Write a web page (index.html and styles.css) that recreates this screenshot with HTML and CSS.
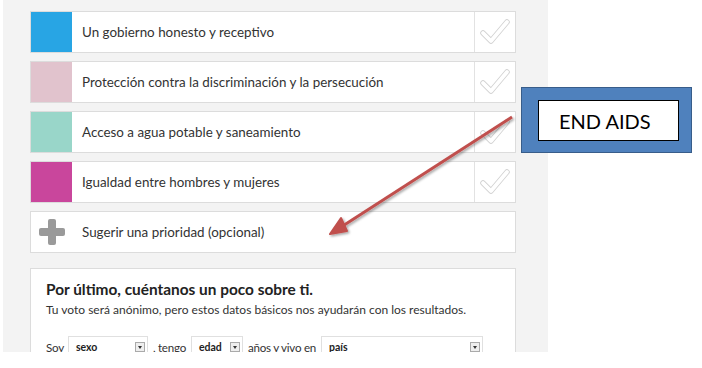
FILE: index.html
```html
<!DOCTYPE html>
<html lang="es">
<head>
<meta charset="utf-8">
<link rel="stylesheet" href="styles.css">
</head>
<body>
<div class="page">
  <div class="list">
    <div class="row">
      <div class="swatch blue"></div>
      <div class="label">Un gobierno honesto y receptivo</div>
      <div class="check"><svg width="30" height="26" viewBox="0 0 30 26"><path d="M3 14 L11 22 L27 3" fill="none" stroke="#d2d2d2" stroke-width="5.5" stroke-linecap="round" stroke-linejoin="round"/><path d="M3 14 L11 22 L27 3" fill="none" stroke="#fff" stroke-width="3.8" stroke-linecap="round" stroke-linejoin="round"/></svg></div>
    </div>
    <div class="row">
      <div class="swatch pink"></div>
      <div class="label">Protección contra la discriminación y la persecución</div>
      <div class="check"><svg width="30" height="26" viewBox="0 0 30 26"><path d="M3 14 L11 22 L27 3" fill="none" stroke="#d2d2d2" stroke-width="5.5" stroke-linecap="round" stroke-linejoin="round"/><path d="M3 14 L11 22 L27 3" fill="none" stroke="#fff" stroke-width="3.8" stroke-linecap="round" stroke-linejoin="round"/></svg></div>
    </div>
    <div class="row">
      <div class="swatch teal"></div>
      <div class="label">Acceso a agua potable y saneamiento</div>
      <div class="check"><svg width="30" height="26" viewBox="0 0 30 26"><path d="M3 14 L11 22 L27 3" fill="none" stroke="#d2d2d2" stroke-width="5.5" stroke-linecap="round" stroke-linejoin="round"/><path d="M3 14 L11 22 L27 3" fill="none" stroke="#fff" stroke-width="3.8" stroke-linecap="round" stroke-linejoin="round"/></svg></div>
    </div>
    <div class="row">
      <div class="swatch magenta"></div>
      <div class="label">Igualdad entre hombres y mujeres</div>
      <div class="check"><svg width="30" height="26" viewBox="0 0 30 26"><path d="M3 14 L11 22 L27 3" fill="none" stroke="#d2d2d2" stroke-width="5.5" stroke-linecap="round" stroke-linejoin="round"/><path d="M3 14 L11 22 L27 3" fill="none" stroke="#fff" stroke-width="3.8" stroke-linecap="round" stroke-linejoin="round"/></svg></div>
    </div>
    <div class="row">
      <div class="swatch plus"><svg width="28" height="28" viewBox="0 0 28 28"><rect x="10" y="1" width="8" height="26" rx="2" fill="#9a9a9a"/><rect x="1" y="10" width="26" height="8" rx="2" fill="#9a9a9a"/></svg></div>
      <div class="label">Sugerir una prioridad (opcional)</div>
    </div>
  </div>
  <div class="card">
    <h2 class="title">Por último, cuéntanos un poco sobre ti.</h2>
    <p class="sub">Tu voto será anónimo, pero estos datos básicos nos ayudarán con los resultados.</p>
    <div class="form">
      <span class="txt">Soy</span>
      <span class="select w-sexo"><b>sexo</b><i class="arr"></i></span>
      <span class="txt">, tengo</span>
      <span class="select w-edad"><b>edad</b><i class="arr"></i></span>
      <span class="txt">años y vivo en</span>
      <span class="select w-pais"><b>país</b><i class="arr"></i></span>
    </div>
  </div>
</div>
<div class="callout"><div class="callout-inner">END AIDS</div></div>
<svg class="arrow" width="702" height="368" viewBox="0 0 702 368">
  <defs>
    <filter id="sh" x="-10%" y="-10%" width="120%" height="120%"><feDropShadow dx="1.5" dy="1.5" stdDeviation="1" flood-color="#000" flood-opacity="0.35"/></filter>
  </defs>
  <g filter="url(#sh)">
    <line x1="512" y1="117" x2="338" y2="229" stroke="#c0504d" stroke-width="3"/>
    <path d="M330 234 L341 218 L347 231 Z" fill="#c0504d" stroke="#c0504d" stroke-width="2" stroke-linejoin="round"/>
  </g>
</svg>
</body>
</html>
```
FILE: styles.css
```css
html, body {
  margin: 0;
  padding: 0;
  background: #fff;
}
body {
  width: 702px;
  height: 368px;
  position: relative;
  overflow: hidden;
  font-family: Lato, "Open Sans", sans-serif;
  color: #333;
}
.page {
  margin-left: 3px;
  width: 545px;
  height: 352px;
  overflow: hidden;
  background: #f3f3f3;
  box-sizing: border-box;
  padding: 11px 0 0 27px;
}
.list {
  width: 486px;
  display: flex;
  flex-direction: column;
  gap: 8px;
}
.row {
  height: 42px;
  box-sizing: border-box;
  border: 1px solid #dcdcdc;
  background: #fff;
  display: flex;
}
.swatch {
  width: 41px;
  flex: none;
}
.blue { background: #28a5e4; }
.pink { background: #e1c3cd; }
.teal { background: #99d6c9; }
.magenta { background: #c9469c; }
.plus {
  display: flex;
  align-items: center;
  justify-content: center;
}
.label {
  flex: 1;
  display: flex;
  align-items: center;
  padding-left: 10px;
  font-size: 13.4px;
  color: #333;
}
.check {
  width: 40px;
  flex: none;
  border-left: 1px solid #e2e2e2;
  display: flex;
  align-items: center;
  justify-content: center;
}
.card {
  width: 486px;
  box-sizing: border-box;
  margin-top: 15px;
  border: 1px solid #dcdcdc;
  background: #fff;
  padding: 10px 15px 20px 15px;
}
.title {
  margin: 0;
  font-size: 15.4px;
  line-height: 20px;
  font-weight: 700;
  color: #222;
}
.sub {
  margin: 2px 0 0 0;
  font-size: 12px;
  line-height: 18px;
  color: #333;
}
.form {
  margin-top: 17px;
  display: flex;
  align-items: center;
  font-size: 11.6px;
  letter-spacing: -0.25px;
  color: #333;
  height: 22px;
  white-space: nowrap;
}
.txt {
  flex: none;
}
.select {
  flex: none;
  height: 22px;
  box-sizing: border-box;
  border: 1px solid #e0e0e0;
  background: #fff;
  display: flex;
  align-items: center;
  justify-content: space-between;
  padding: 0 2px 0 7px;
  font-size: 10.5px;
  letter-spacing: 0;
  margin: 0 5px;
}
.select b {
  font-weight: 700;
  color: #222;
}
.w-sexo { width: 80px; margin-left: 4px; }
.w-edad { width: 52px; }
.w-pais { width: 162px; }
.arr {
  width: 10px;
  height: 10px;
  border: 1px solid #aaa;
  box-sizing: border-box;
  background: #eee;
  position: relative;
}
.arr::after {
  content: "";
  position: absolute;
  left: 2px;
  top: 3px;
  border-left: 2px solid transparent;
  border-right: 2px solid transparent;
  border-top: 3px solid #333;
}
.callout {
  position: absolute;
  left: 521px;
  top: 87px;
  width: 171px;
  height: 66px;
  box-sizing: border-box;
  background: #4f81bd;
  border: 1px solid #385d8a;
  padding: 12px 12px 11px 16px;
}
.callout-inner {
  height: 100%;
  box-sizing: border-box;
  background: #fff;
  border: 1px solid #000;
  display: flex;
  align-items: center;
  padding-left: 20px;
  font-family: Lato, "Liberation Sans", sans-serif;
  font-size: 20px;
  color: #000;
}
.arrow {
  position: absolute;
  left: 0;
  top: 0;
}
```
